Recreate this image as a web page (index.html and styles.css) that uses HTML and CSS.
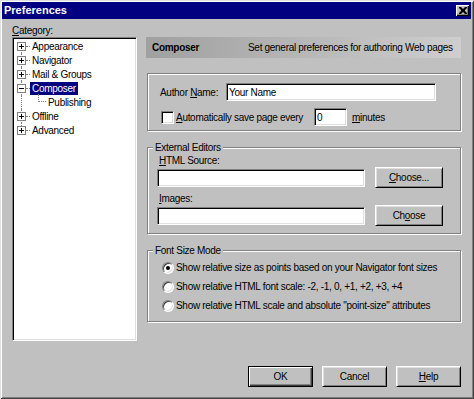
FILE: index.html
```html
<!DOCTYPE html>
<html lang="en">
<head>
    <meta charset="UTF-8">
    <title>Preferences</title>
    <link rel="stylesheet" href="styles.css">
</head>
<body>

    <div class="window">
        <div class="titlebar">
            <span class="title">Preferences</span>
            <span class="close">
                <svg width="8" height="7" viewBox="0 0 8 7"><path d="M0 0h2l2 2 2-2h2v1l-2 2v1l2 2v1h-2l-2-2-2 2h-2v-1l2-2v-1l-2-2z" fill="#000"/></svg>
            </span>
        </div>

        <div class="main">
            <div class="sidebar">
                <div class="caption"><u>C</u>ategory:</div>
                <div class="tree">
                    <div class="node root first">
                        <svg class="toggle" width="9" height="9"><rect x="0.5" y="0.5" width="8" height="8" fill="#fff" stroke="#808080"/><path d="M2 4.5h5M4.5 2v5" stroke="#000"/></svg>
                        <span class="dash"></span><span class="name">Appearance</span>
                    </div>
                    <div class="node root">
                        <svg class="toggle" width="9" height="9"><rect x="0.5" y="0.5" width="8" height="8" fill="#fff" stroke="#808080"/><path d="M2 4.5h5M4.5 2v5" stroke="#000"/></svg>
                        <span class="dash"></span><span class="name">Navigator</span>
                    </div>
                    <div class="node root">
                        <svg class="toggle" width="9" height="9"><rect x="0.5" y="0.5" width="8" height="8" fill="#fff" stroke="#808080"/><path d="M2 4.5h5M4.5 2v5" stroke="#000"/></svg>
                        <span class="dash"></span><span class="name">Mail &amp; Groups</span>
                    </div>
                    <div class="node root">
                        <svg class="toggle" width="9" height="9"><rect x="0.5" y="0.5" width="8" height="8" fill="#fff" stroke="#808080"/><path d="M2 4.5h5" stroke="#000"/></svg>
                        <span class="dash"></span><span class="name selected">Composer</span>
                    </div>
                    <div class="node root child">
                        <span class="elbow"></span><span class="name">Publishing</span>
                    </div>
                    <div class="node root">
                        <svg class="toggle" width="9" height="9"><rect x="0.5" y="0.5" width="8" height="8" fill="#fff" stroke="#808080"/><path d="M2 4.5h5M4.5 2v5" stroke="#000"/></svg>
                        <span class="dash"></span><span class="name">Offline</span>
                    </div>
                    <div class="node root last">
                        <svg class="toggle" width="9" height="9"><rect x="0.5" y="0.5" width="8" height="8" fill="#fff" stroke="#808080"/><path d="M2 4.5h5M4.5 2v5" stroke="#000"/></svg>
                        <span class="dash"></span><span class="name">Advanced</span>
                    </div>
                </div>
            </div>

            <div class="panel">
                <div class="banner">
                    <span class="banner-title">Composer</span>
                    <span>Set general preferences for authoring Web pages</span>
                </div>

                <div class="group plain">
                    <div class="row author-row">
                        <span class="author-label">Author <u>N</u>ame:</span>
                        <input class="field author" type="text" value="Your Name">
                    </div>
                    <div class="row save-row">
                        <span class="check"></span>
                        <span class="save-label"><u>A</u>utomatically save page every</span>
                        <input class="field minutes" type="text" value="0">
                        <span class="unit"><u>m</u>inutes</span>
                    </div>
                </div>

                <fieldset class="group">
                    <legend>External Editors</legend>
                    <div class="group-body editors">
                        <div class="field-label"><u>H</u>TML Source:</div>
                        <div class="row editor-row">
                            <input class="field path" type="text">
                            <button class="btn choose"><u>C</u>hoose...</button>
                        </div>
                        <div class="field-label images"><u>I</u>mages:</div>
                        <div class="row editor-row">
                            <input class="field path" type="text">
                            <button class="btn choose">Ch<u>o</u>ose</button>
                        </div>
                    </div>
                </fieldset>

                <fieldset class="group">
                    <legend>Font Size Mode</legend>
                    <div class="group-body modes">
                        <div class="row radio-row"><span class="radio on"></span>Show relative size as points based on your Navigator font sizes</div>
                        <div class="row radio-row"><span class="radio"></span>Show relative HTML font scale: -2, -1, 0, +1, +2, +3, +4</div>
                        <div class="row radio-row"><span class="radio"></span>Show relative HTML scale and absolute "point-size" attributes</div>
                    </div>
                </fieldset>
            </div>
        </div>

        <div class="footer">
            <button class="btn default">OK</button>
            <button class="btn">Cancel</button>
            <button class="btn"><u>H</u>elp</button>
        </div>
    </div>

</body>
</html>
```

FILE: styles.css
```css
* {
  margin: 0;
  padding: 0;
  box-sizing: border-box;
}
body {
  font-family: "Liberation Sans", Arial, sans-serif;
  font-size: 10px;
  letter-spacing: -0.3px;
  line-height: 13px;
  color: #000;
  background: #c0c0c0;
}
.window {
  width: 474px;
  height: 399px;
  padding-top: 2px;
  background: #c0c0c0;
  box-shadow: inset 1px 1px 0 #dfdfdf, inset -1px -1px 0 #404040,
              inset 2px 2px 0 #fff, inset -2px -2px 0 #808080;
  display: flex;
  flex-direction: column;
}

/* title bar */
.titlebar {
  height: 17px;
  margin: 0 3px 0 2px;
  padding: 0 2px 0 2px;
  background: #000080;
  color: #fff;
  display: flex;
  align-items: center;
  justify-content: space-between;
}
.title {
  font-size: 11px;
  font-weight: bold;
  letter-spacing: 0;
}
.close {
  width: 13px;
  height: 11px;
  background: #c0c0c0;
  box-shadow: inset 1px 1px 0 #fff, inset -1px -1px 0 #000, inset -2px -2px 0 #808080;
  display: flex;
  align-items: center;
  justify-content: center;
}
.close svg {
  display: block;
}

.main {
  display: flex;
  align-items: flex-start;
  gap: 9px;
  padding: 5px 0 0 12px;
}

/* category tree */
.sidebar {
  width: 125px;
}
.tree {
  height: 304px;
  padding: 1px;
  background: #fff;
  border: 1px solid;
  border-color: #808080 #fff #fff #808080;
  box-shadow: inset 1px 1px 0 #000, inset -1px -1px 0 #dfdfdf;
}
.node {
  position: relative;
  height: 14px;
  padding-left: 3px;
  display: flex;
  align-items: center;
  white-space: nowrap;
}
.node.root::before {
  content: "";
  position: absolute;
  left: 7px;
  top: 0;
  bottom: 0;
  border-left: 1px dotted #808080;
}
.node.first::before {
  top: 7px;
}
.node.last::before {
  bottom: 7px;
}
.toggle {
  position: relative;
  display: block;
  flex: none;
}
.dash {
  width: 4px;
  border-top: 1px dotted #808080;
}
.name {
  padding: 0 2px;
  height: 13px;
}
.name.selected {
  background: #000080;
  color: #fff;
}
.node.child {
  padding-left: 32px;
}
.elbow {
  position: absolute;
  left: 24px;
  top: -1px;
  width: 8px;
  height: 8px;
  border-left: 1px dotted #808080;
  border-bottom: 1px dotted #808080;
}

/* right panel */
.panel {
  width: 315px;
  margin-top: 13px;
}
.banner {
  height: 21px;
  padding-left: 6px;
  background: linear-gradient(to right, #a0a0a0, #cecece);
  display: flex;
  align-items: center;
  white-space: nowrap;
}
.banner-title {
  width: 96px;
  font-weight: bold;
}
.group {
  margin-left: 1px;
  border: 1px solid #808080;
  box-shadow: inset 1px 1px 0 #fff, 1px 1px 0 #fff;
  min-width: 0;
}
fieldset.group {
  margin-top: 10px;
  padding: 0 0 0 5px;
}
legend {
  padding: 0 2px;
  background: #c0c0c0;
  line-height: 13px;
}
.row {
  display: flex;
  align-items: center;
  white-space: nowrap;
}
.plain {
  height: 58px;
  margin-top: 15px;
  padding: 9px 0 0 12px;
}
.author-row {
  height: 18px;
}
.author-label {
  width: 66px;
  flex: none;
}
.field {
  flex: none;
  height: 18px;
  padding: 0 2px;
  background: #fff;
  border: 1px solid;
  border-color: #808080 #fff #fff #808080;
  box-shadow: inset 1px 1px 0 #000, inset -1px -1px 0 #dfdfdf;
  font: inherit;
  letter-spacing: inherit;
  color: #000;
  outline: none;
}
.author {
  width: 210px;
}
.save-row {
  height: 18px;
  margin-top: 7px;
}
.check {
  flex: none;
  width: 13px;
  height: 13px;
  margin: 0 2px 0 1px;
  background: #fff;
  border: 1px solid;
  border-color: #808080 #fff #fff #808080;
  box-shadow: inset 1px 1px 0 #000, inset -1px -1px 0 #dfdfdf;
}
.save-label {
  width: 138px;
  flex: none;
}
.minutes {
  width: 33px;
}
.unit {
  margin-left: 5px;
}

.editors {
  padding: 0 0 7px 4px;
}
.field-label {
  margin-left: 2px;
}
.field-label.images {
  margin-top: 4px;
}
.editor-row {
  height: 21px;
}
.path {
  width: 208px;
}

.modes {
  padding: 1px 0 6px 9px;
}
.radio-row {
  height: 19px;
}
.radio {
  flex: none;
  width: 12px;
  height: 12px;
  margin-right: 2px;
  border-radius: 50%;
  background: #fff;
  border: 1px solid;
  border-color: #808080 #fff #fff #808080;
  box-shadow: inset 1px 1px 0 #404040, inset -1px -1px 0 #dfdfdf;
  display: flex;
  align-items: center;
  justify-content: center;
}
.radio.on::after {
  content: "";
  width: 4px;
  height: 4px;
  border-radius: 50%;
  background: #000;
}

/* buttons */
.btn {
  flex: none;
  width: 65px;
  height: 21px;
  background: #c0c0c0;
  border: 1px solid;
  border-color: #fff #000 #000 #fff;
  box-shadow: inset 1px 1px 0 #dfdfdf, inset -1px -1px 0 #808080;
  font: inherit;
  letter-spacing: inherit;
  color: #000;
}
.choose {
  width: 68px;
  margin-left: 10px;
}
.btn.default {
  border: 1px solid #000;
  box-shadow: inset 1px 1px 0 #fff, inset -1px -1px 0 #404040, inset -2px -2px 0 #808080;
}
.footer {
  display: flex;
  justify-content: flex-end;
  gap: 9px;
  margin-top: 25px;
  padding-right: 13px;
}
```
